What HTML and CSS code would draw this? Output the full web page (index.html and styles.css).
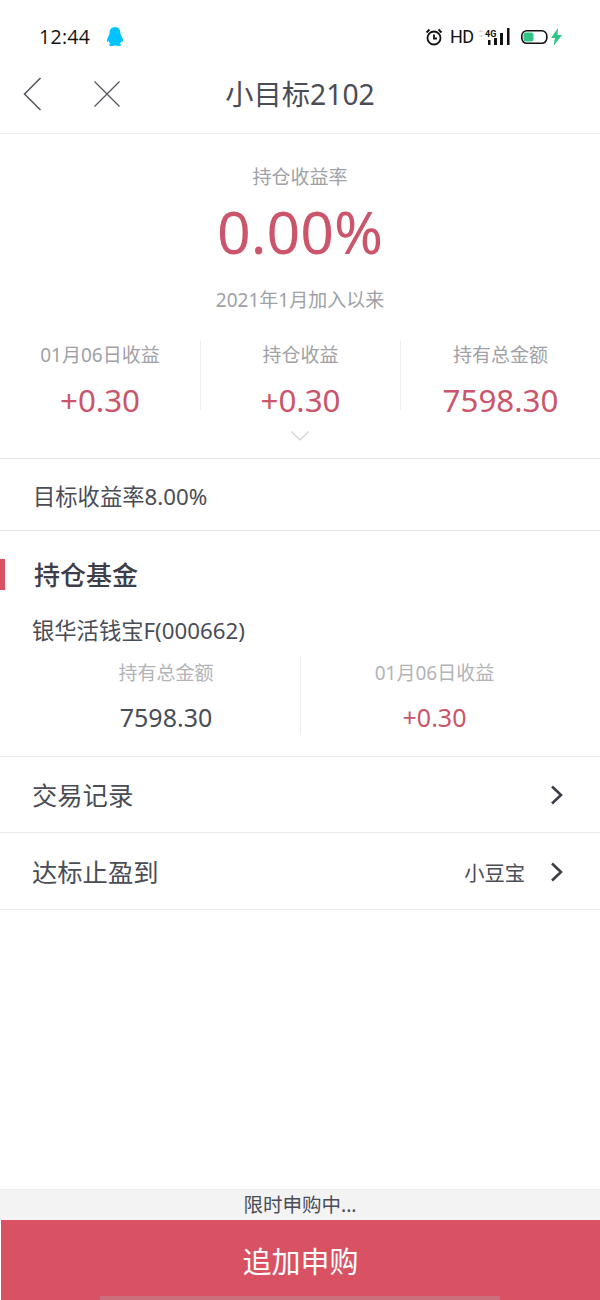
FILE: index.html
```html
<!DOCTYPE html>
<html lang="zh-CN">
<head>
<meta charset="utf-8">
<title>小目标2102</title>
<link rel="stylesheet" href="styles.css">
</head>
<body>
<div class="page">
  <div class="status">
    <div class="status-left">
      <span class="time">12:44</span>
      <svg class="qq" width="20" height="22" viewBox="0 0 20 22"><path fill="#00c3ff" d="M10 1c3.600 0 5.400 2.800 5.500 6.200.1 1.500.6 2.300 1.300 3.500.9 1.500 1.500 3.200 1.100 4.900-.3.900-1.100.2-1.600-.7-.3 1.200-.9 2.200-1.700 2.900 1 .4 1.600.9 1.500 1.500-.1.600-2 .9-3.400.8-1-.1-1.400-.5-1.700-.5h-2c-.3 0-.7.400-1.700.5-1.400.1-3.300-.2-3.400-.8-.1-.6.500-1.100 1.500-1.500-.8-.7-1.400-1.700-1.700-2.900-.5.900-1.300 1.600-1.600.7-.4-1.700.2-3.400 1.100-4.900.7-1.200 1.200-2 1.300-3.500C4.600 3.800 6.400 1 10 1z"/></svg>
    </div>
    <div class="status-right">
      <svg width="18" height="18" viewBox="0 0 18 18" fill="none" stroke="#111" stroke-width="1.800"><circle cx="9" cy="10" r="6.500"/><path d="M9 6.500V10.500H12M1.500 4.500L4.500 1.500M16.500 4.500L13.500 1.500"/></svg>
      <span class="hd">HD</span>
      <svg class="signal" width="33" height="18" viewBox="0 0 33 18"><path fill="none" stroke="#bbb" d="M1.500 4l1.500-1.500L4.500 4M1.500 7l1.500 1.500L4.500 7"/><text x="7" y="9" class="net">4G</text><rect x="10" y="12" width="2.500" height="5" fill="#111"/><rect x="16" y="10" width="3" height="7" fill="#111"/><rect x="22" y="5" width="3" height="12" fill="#111"/><rect x="29" y="0" width="2.500" height="17" fill="#111"/></svg>
      <svg class="battery" width="43" height="18" viewBox="0 0 43 18"><rect x="1.800" y="2.800" width="25" height="12.500" rx="5" fill="none" stroke="#111" stroke-width="1.600"/><rect x="3.500" y="4.500" width="10" height="9" rx="2.500" fill="#2fc584"/><path fill="#2fc584" d="M38 0L31 10h4l-1.500 8L42 7h-4.500z"/></svg>
    </div>
  </div>
  <header class="nav">
    <svg class="nav-back" width="20" height="34" viewBox="0 0 20 34" fill="none" stroke="#50535c" stroke-width="1.500"><path d="M17.500 1L1.500 17l16 16"/></svg>
    <svg class="nav-close" width="28" height="28" viewBox="0 0 28 28" fill="none" stroke="#50535c" stroke-width="1.200"><path d="M1.500 1.500l25 25M26.500 1.500l-25 25"/></svg>
    <h1 class="title">小目标2102</h1>
  </header>
  <section class="hero">
    <div class="hero-label">持仓收益率</div>
    <div class="hero-rate">0.00%</div>
    <div class="hero-since">2021年1月加入以来</div>
    <div class="stats">
      <div class="stat"><div class="stat-label">01月06日收益</div><div class="stat-value">+0.30</div></div>
      <div class="stat"><div class="stat-label">持仓收益</div><div class="stat-value">+0.30</div></div>
      <div class="stat"><div class="stat-label">持有总金额</div><div class="stat-value">7598.30</div></div>
    </div>
    <svg class="expand" width="20" height="12" viewBox="0 0 20 12" fill="none" stroke="#cfd0d3" stroke-width="1.200"><path d="M1.500 1.500L10 10l8.500-8.500"/></svg>
  </section>
  <div class="target">目标收益率8.00%</div>
  <section class="holdings">
    <h2 class="section-title">持仓基金</h2>
    <div class="fund-name">银华活钱宝F(000662)</div>
    <div class="fund-stats">
      <div class="fund-stat"><div class="fund-label">持有总金额</div><div class="fund-value">7598.30</div></div>
      <div class="fund-stat"><div class="fund-label">01月06日收益</div><div class="fund-value is-up">+0.30</div></div>
    </div>
  </section>
  <div class="row">
    <span class="row-text">交易记录</span>
    <svg class="chev" width="14" height="20" viewBox="0 0 14 20" fill="none" stroke="#3c3e4a" stroke-width="2.600"><path d="M2 1.500L11 10l-9 8.500"/></svg>
  </div>
  <div class="row">
    <span class="row-text">达标止盈到</span>
    <span class="row-extra">小豆宝</span>
    <svg class="chev" width="14" height="20" viewBox="0 0 14 20" fill="none" stroke="#3c3e4a" stroke-width="2.600"><path d="M2 1.500L11 10l-9 8.500"/></svg>
  </div>
  <div class="spacer"></div>
  <div class="promo">限时申购中...</div>
  <button class="buy">追加申购<span class="home-bar"></span></button>
</div>
</body>
</html>
```

FILE: styles.css
```css
* { box-sizing: border-box; margin: 0; padding: 0; }
html, body { background: #fff; }
body { width: 600px; height: 1300px; overflow: hidden; font-family: "Noto Sans", "Noto Sans CJK SC", sans-serif; color: #4a4c56; }
.page { width: 600px; height: 1300px; display: flex; flex-direction: column; }

.status { height: 60px; padding: 13px 37px 0 39px; display: flex; justify-content: space-between; align-items: center; }
.status-left { display: flex; align-items: center; gap: 15px; }
.time { font-family: "Open Sans", sans-serif; font-size: 19.500px; line-height: 26px; color: #111; letter-spacing: .3px; }
.status-right { display: flex; align-items: center; gap: 7px; }
.hd { width: 21px; font-family: "Roboto", sans-serif; font-size: 18px; line-height: 20px; color: #111; white-space: nowrap; letter-spacing: -.5px; }
.net { font-family: "Roboto", sans-serif; font-size: 9px; font-weight: 700; fill: #111; }
.battery { margin-left: 2px; }

.nav { height: 74px; display: flex; align-items: center; justify-content: center; position: relative; border-bottom: 1px solid #ededee; }
.nav-back { position: absolute; left: 23px; top: 17px; }
.nav-close { position: absolute; left: 93px; top: 20px; }
.title { font-size: 28.300px; line-height: 40px; font-weight: 400; color: #4a4c56; margin-top: -6px; }

.hero { height: 325px; display: flex; flex-direction: column; align-items: center; border-bottom: 1px solid #e6e6e8; }
.hero-label { margin-top: 29px; font-size: 19px; line-height: 28px; color: #a0a1a6; }
.hero-rate { margin-top: 5px; font-size: 59px; line-height: 70px; color: #cb566b; }
.hero-since { margin-top: 21px; font-size: 19px; line-height: 26px; color: #a0a1a6; }
.stats { width: 100%; margin-top: 28px; display: grid; grid-template-columns: repeat(3, 1fr); }
.stat { height: 69px; display: flex; flex-direction: column; align-items: center; border-left: 1px solid #eeeeef; }
.stat:first-child { border-left: 0; }
.stat-label { font-size: 19px; line-height: 28px; color: #a0a1a6; }
.stat-value { margin-top: 11px; font-size: 31.300px; line-height: 40px; color: #cb566b; }
.expand { margin-top: 20px; }

.target { height: 72px; padding: 2px 0 0 33px; display: flex; align-items: center; border-bottom: 1px solid #e6e6e8; font-size: 22.300px; color: #4a4c56; }

.holdings { height: 226px; padding-top: 28px; border-bottom: 1px solid #e9e9ea; }
.section-title { height: 31px; padding-left: 29px; border-left: 5px solid #d95263; font-size: 26px; line-height: 33px; font-weight: 500; color: #3c3e4a; }
.fund-name { margin-top: 26px; padding-left: 32px; font-size: 22.300px; line-height: 30px; color: #4a4c56; }
.fund-stats { margin: 10px 32px 0; display: grid; grid-template-columns: repeat(2, 1fr); }
.fund-stat { height: 79px; display: flex; flex-direction: column; align-items: center; }
.fund-stat + .fund-stat { border-left: 1px solid #eeeeef; }
.fund-label { margin-top: 4px; font-size: 19px; line-height: 26px; color: #b2b3b8; }
.fund-value { margin-top: 14px; font-size: 25px; line-height: 34px; color: #4a4c56; }
.is-up { color: #cb566b; }

.row { height: 76px; padding: 0 36px 0 32px; display: flex; align-items: center; border-bottom: 1px solid #e9e9ea; }
.row + .row { height: 77px; padding-top: 1px; }
.row-text { flex: 1; font-size: 25.300px; line-height: 34px; color: #4a4c56; }
.row-extra { margin-right: 25px; font-size: 20.300px; color: #4a4c56; }

.spacer { flex: 1; }
.promo { height: 31px; background: #f3f3f4; border-top: 1px solid #ececed; text-align: center; font-size: 19.500px; line-height: 29px; color: #4a4c56; }
.buy { height: 80px; margin-left: 1px; border: 0; background: #d95263; color: #fff; font-family: inherit; font-size: 29px; font-weight: 400; position: relative; }
.home-bar { position: absolute; left: 99px; right: 100px; bottom: 0; height: 4px; background: #c9707c; border-radius: 2px 2px 0 0; }
```
